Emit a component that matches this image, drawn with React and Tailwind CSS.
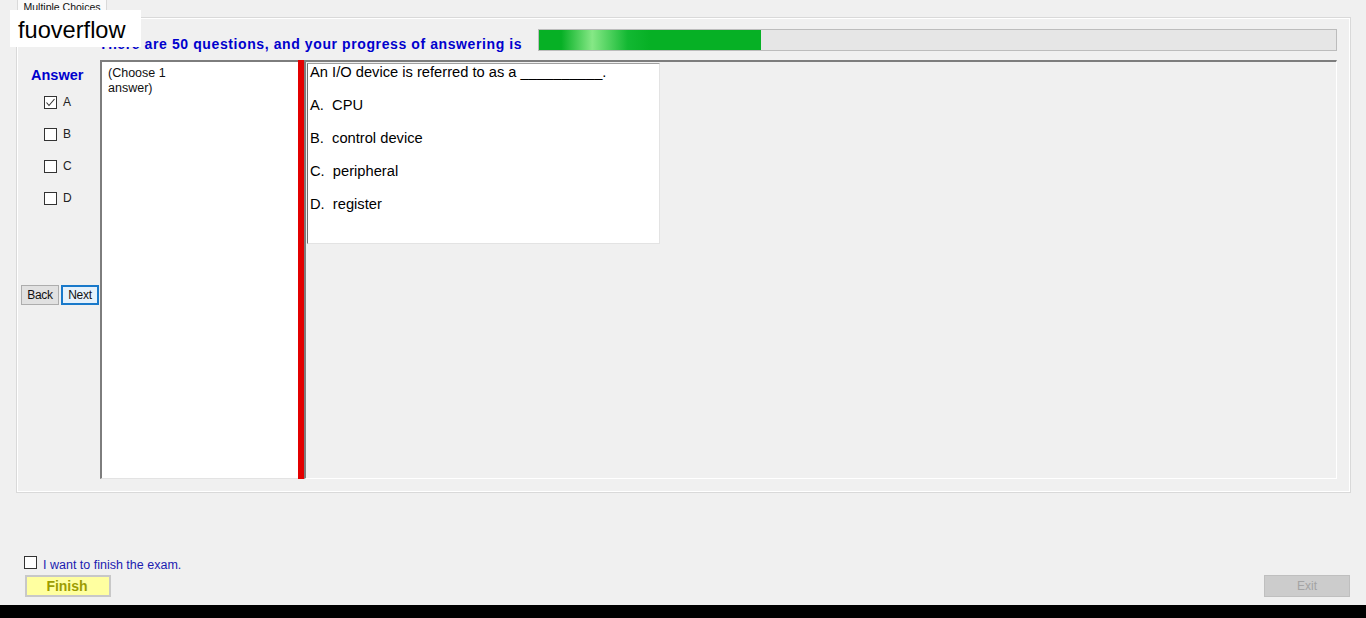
import React from "react";

function Box({ checked }) {
  return (
    <div className="w-[13px] h-[13px] border border-[#333333] bg-white flex items-center justify-center shrink-0">
      {checked && (
        <svg width="11" height="11" viewBox="0 0 11 11">
          <polyline points="1.5,5.5 4,8.5 9.5,2" fill="none" stroke="#333333" strokeWidth="1.1" />
        </svg>
      )}
    </div>
  );
}

export default function App() {
  const font = "font-['Liberation_Sans',Arial,sans-serif]";
  const opts = [
    ["A.  ", "CPU"],
    ["B.  ", "control device"],
    ["C.  ", "peripheral"],
    ["D.  ", "register"],
  ];
  return (
    <div className={`relative w-[1366px] h-[618px] bg-[#f0f0f0] flex flex-col overflow-hidden ${font}`}>
      {/* tab strip */}
      <div className="h-[17px] pl-[17px] flex items-end">
        <div className="w-[90px] h-[20px] -mt-[3px] bg-[#fafafa] border border-b-0 border-[#d9d9d9] flex items-end justify-center pb-[4px]">
          <span className="text-[10.5px] leading-[12px] text-[#111] whitespace-nowrap">Multiple Choices</span>
        </div>
      </div>

      {/* tab panel */}
      <div className="ml-[16px] w-[1335px] h-[476px] border border-[#d9d9d9]">
        <div className="w-full h-full border border-white flex flex-col">
          {/* header */}
          <div className="mt-[10px] flex items-end pl-[81px]">
            <div className="w-[439px] whitespace-nowrap text-[14px] leading-[16px] font-bold tracking-[0.6px] text-[#0000cd] translate-y-[1px]">
              There are 50 questions, and your progress of answering is
            </div>
            <div className="w-[799px] h-[22px] border border-[#bcbcbc] bg-[#e6e6e6]">
              <div className="h-full w-[222px] bg-[linear-gradient(90deg,#06b025_0%,#06b025_10%,#86e886_24%,#12b832_40%,#06b025_50%,#06b025_100%)]" />
            </div>
          </div>

          {/* content row */}
          <div className="mt-[9px] flex h-[419px]">
            {/* left column */}
            <div className="w-[82px] flex flex-col">
              <div className="pt-[6px] pl-[13px] text-[14.5px] leading-[18px] font-bold text-[#0000cd]">Answer</div>
              <div className="mt-[12px] pl-[26px] flex flex-col gap-[19px]">
                {["A", "B", "C", "D"].map((l, i) => (
                  <div key={l} className="flex items-center gap-[6px] h-[13px]">
                    <Box checked={i === 0} />
                    <span className="text-[12px] leading-[13px] text-[#222]">{l}</span>
                  </div>
                ))}
              </div>
              <div className="mt-[80px] pl-[3px] flex gap-[2px]">
                <div className="w-[38px] h-[20px] border border-[#adadad] bg-[#e1e1e1] flex items-center justify-center text-[12px] tracking-[-0.3px] text-[#111]">Back</div>
                <div className="w-[38px] h-[20px] border-2 border-[#1979ca] bg-[#e5f1fb] flex items-center justify-center text-[12px] tracking-[-0.3px] text-[#111]">Next</div>
              </div>
            </div>

            {/* left text box */}
            <div className="w-[198px] h-full bg-white border-t-2 border-l-2 border-b border-t-[#7d7d7d] border-l-[#7d7d7d] border-b-[#e3e3e3] pl-[6px] pt-[4px]">
              <div className="text-[12.5px] leading-[15px] text-[#111]">
                (Choose 1
                <br />
                answer)
              </div>
            </div>

            {/* red bar */}
            <div className="w-[6px] h-full bg-[#e30000]" />

            {/* right area */}
            <div className="w-[1033px] h-full bg-[#f0f0f0] border-t-2 border-l-2 border-b border-r border-t-[#7d7d7d] border-l-[#7d7d7d] border-b-white border-r-white">
              <div className="ml-[1px] mt-[1px] w-[353px] h-[181px] bg-white border-l border-t border-b border-r border-l-[#6d6d6d] border-t-[#a0a0a0] border-b-[#e3e3e3] border-r-[#e3e3e3] pl-[2px] flex flex-col gap-[16px]">
                <div className="text-[14.7px] leading-[17px] text-black whitespace-pre">An I/O device is referred to as a __________.</div>
                {opts.map(([a, b]) => (
                  <div key={a} className="text-[14.7px] leading-[17px] text-black whitespace-pre">
                    {a}
                    {b}
                  </div>
                ))}
              </div>
            </div>
          </div>
        </div>
      </div>

      {/* bottom */}
      <div className="mt-[63px] pl-[24px] flex items-center gap-[6px] h-[13px]">
        <Box checked={false} />
        <span className="text-[12.5px] leading-[14px] text-[#1c1cb0] mt-[4px]">I want to finish the exam.</span>
      </div>
      <div className="mt-[6px] pl-[25px] pr-[16px] flex justify-between">
        <div className="w-[86px] h-[22px] border-2 border-[#c8c8c8] bg-[#ffffa0] flex items-center justify-center text-[14px] font-bold text-[#9c9c00] pt-[1px]">
          <span className="-translate-x-[1px]">Finish</span>
        </div>
        <div className="w-[86px] h-[22px] border border-[#bfbfbf] bg-[#cccccc] flex items-center justify-center text-[12px] text-[#a3a3a3]">Exit</div>
      </div>

      <div className="mt-auto h-[13px] bg-black" />

      {/* watermark overlay */}
      <div className="absolute left-[10px] top-[10px] w-[131px] h-[37px] bg-white pl-[8px] pt-[3px] flex items-center">
        <span className="text-[23.6px] leading-[28px] text-black">fuoverflow</span>
      </div>
    </div>
  );
}
